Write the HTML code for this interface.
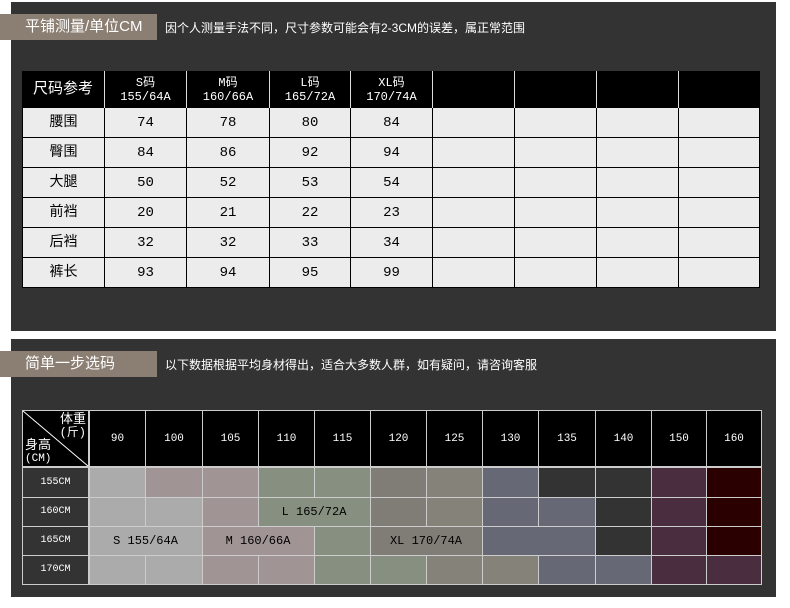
<!DOCTYPE html><html><head><meta charset="utf-8"><style>
*{margin:0;padding:0;box-sizing:border-box}
body{width:790px;height:608px;background:#fff;position:relative;overflow:hidden;font-family:"Liberation Mono","Noto Sans CJK SC",monospace}
.p{position:absolute;left:11px;width:765px;background:#333}
.tag{position:absolute;left:0;width:157px;height:26px;background:#8b7e72;color:#fff;font-family:"Liberation Sans","Noto Sans CJK SC",sans-serif;font-size:15px;line-height:26px;padding-left:25px}
.note{position:absolute;color:#fff;font-family:"Liberation Sans","Noto Sans CJK SC",sans-serif;font-size:12px}
.c{position:absolute;display:flex;align-items:center;justify-content:center;text-align:center;font-size:12px;line-height:14px}
.h{background:#000;color:#fff}
.b{background:#ececec;color:#000;border-right:1px solid #000;border-bottom:1px solid #000;font-size:14px}
.d span{position:absolute;line-height:13px}
</style></head><body>
<div class="p" style="top:2px;height:329px"></div>
<div class="p" style="top:339px;height:258px"></div>
<div class="tag" style="top:14px">平铺测量/单位CM</div>
<div class="note" style="left:165px;top:19px">因个人测量手法不同，尺寸参数可能会有2-3CM的误差，属正常范围</div>
<div class="tag" style="top:351px">简单一步选码</div>
<div class="note" style="left:165px;top:356px">以下数据根据平均身材得出，适合大多数人群，如有疑问，请咨询客服</div>
<div id="t1"></div>
<script>
var h='';var cx=[22,105,187,270,351,433,515,597,679,760];
var hd=['尺码参考','S码<br>155/64A','M码<br>160/66A','L码<br>165/72A','XL码<br>170/74A','','','',''];
for(var i=0;i<9;i++){h+='<div class="c h" style="left:'+cx[i]+'px;top:71px;width:'+(cx[i+1]-cx[i])+'px;height:37px;'+(i<8?'border-right:1px solid #ddd;':'')+(i==0?'font-size:15px;':'')+'">'+hd[i]+'</div>';}
var rows=[['腰围',74,78,80,84],['臀围',84,86,92,94],['大腿',50,52,53,54],['前裆',20,21,22,23],['后裆',32,32,33,34],['裤长',93,94,95,99]];
for(var r=0;r<6;r++){for(var i=0;i<9;i++){var v=rows[r][i]!==undefined?rows[r][i]:'';h+='<div class="c b" style="left:'+cx[i]+'px;top:'+(108+r*30)+'px;width:'+(cx[i+1]-cx[i])+'px;height:30px;'+(i==0?'border-left:1px solid #000;':'')+'">'+v+'</div>';}}
var x2=[22,89,145,202,258,314,370,426,482,538,595,651,706,761];
var ws=['90','100','105','110','115','120','125','130','135','140','150','160'];
h+='<div style="position:absolute;left:22px;top:410px;width:740px;height:175px;background:#ccc"></div>';
h+='<div class="h d" style="position:absolute;left:23px;top:411px;width:65px;height:55px;font-size:12px;overflow:hidden"><svg width="65" height="55" style="position:absolute;left:0;top:0"><line x1="0" y1="0" x2="65" y2="55" stroke="#fff" stroke-width="1"/></svg><span style="right:2px;top:2px;font-size:13px">体重</span><span style="right:2px;top:16px">(斤)</span><span style="left:2px;top:28px;font-size:13px">身高</span><span style="left:2px;top:42px;font-size:11px">(CM)</span></div>';
for(var i=0;i<12;i++)h+='<div class="c h" style="left:'+(x2[i+1]+1)+'px;top:411px;width:'+(x2[i+2]-x2[i+1]-1)+'px;height:55px;font-size:11px">'+ws[i]+'</div>';
var G='#ababab',M='#a09594',N='#879080',T='#807d77',U='#858279',B='#676876',D='#333',P='#4a2e40',R='#2a0000';
var col=[[G,M,M,N,N,T,U,B,D,D,P,R],[G,G,M,N,N,T,U,B,B,D,P,R],[G,G,M,M,N,T,T,B,B,D,P,R],[G,G,M,M,N,N,U,U,B,B,P,P]];
var ry=[467,497,526,555,584];var hs=['155CM','160CM','165CM','170CM'];
for(var r=0;r<4;r++){h+='<div class="c" style="left:23px;top:'+(ry[r]+1)+'px;width:65px;height:'+(ry[r+1]-ry[r]-1)+'px;background:#333;color:#fff;font-size:10px">'+hs[r]+'</div>';
for(var i=0;i<12;i++){var hb=(r==2&&(i==0||i==2||i==5||i==7))||(r==1&&i==3);h+='<div style="position:absolute;left:'+(x2[i+1]+1)+'px;top:'+(ry[r]+1)+'px;width:'+(x2[i+2]-x2[i+1]-(hb?0:1))+'px;height:'+(ry[r+1]-ry[r]-1)+'px;background:'+col[r][i]+'"></div>';}}
h+='<div class="c" style="left:258px;top:498px;width:112px;height:28px;color:#000">L 165/72A</div>';
h+='<div class="c" style="left:89px;top:527px;width:113px;height:28px;color:#000">S 155/64A</div>';
h+='<div class="c" style="left:202px;top:527px;width:112px;height:28px;color:#000">M 160/66A</div>';
h+='<div class="c" style="left:370px;top:527px;width:112px;height:28px;color:#000">XL 170/74A</div>';
document.getElementById('t1').innerHTML=h;
</script>
</body></html>
